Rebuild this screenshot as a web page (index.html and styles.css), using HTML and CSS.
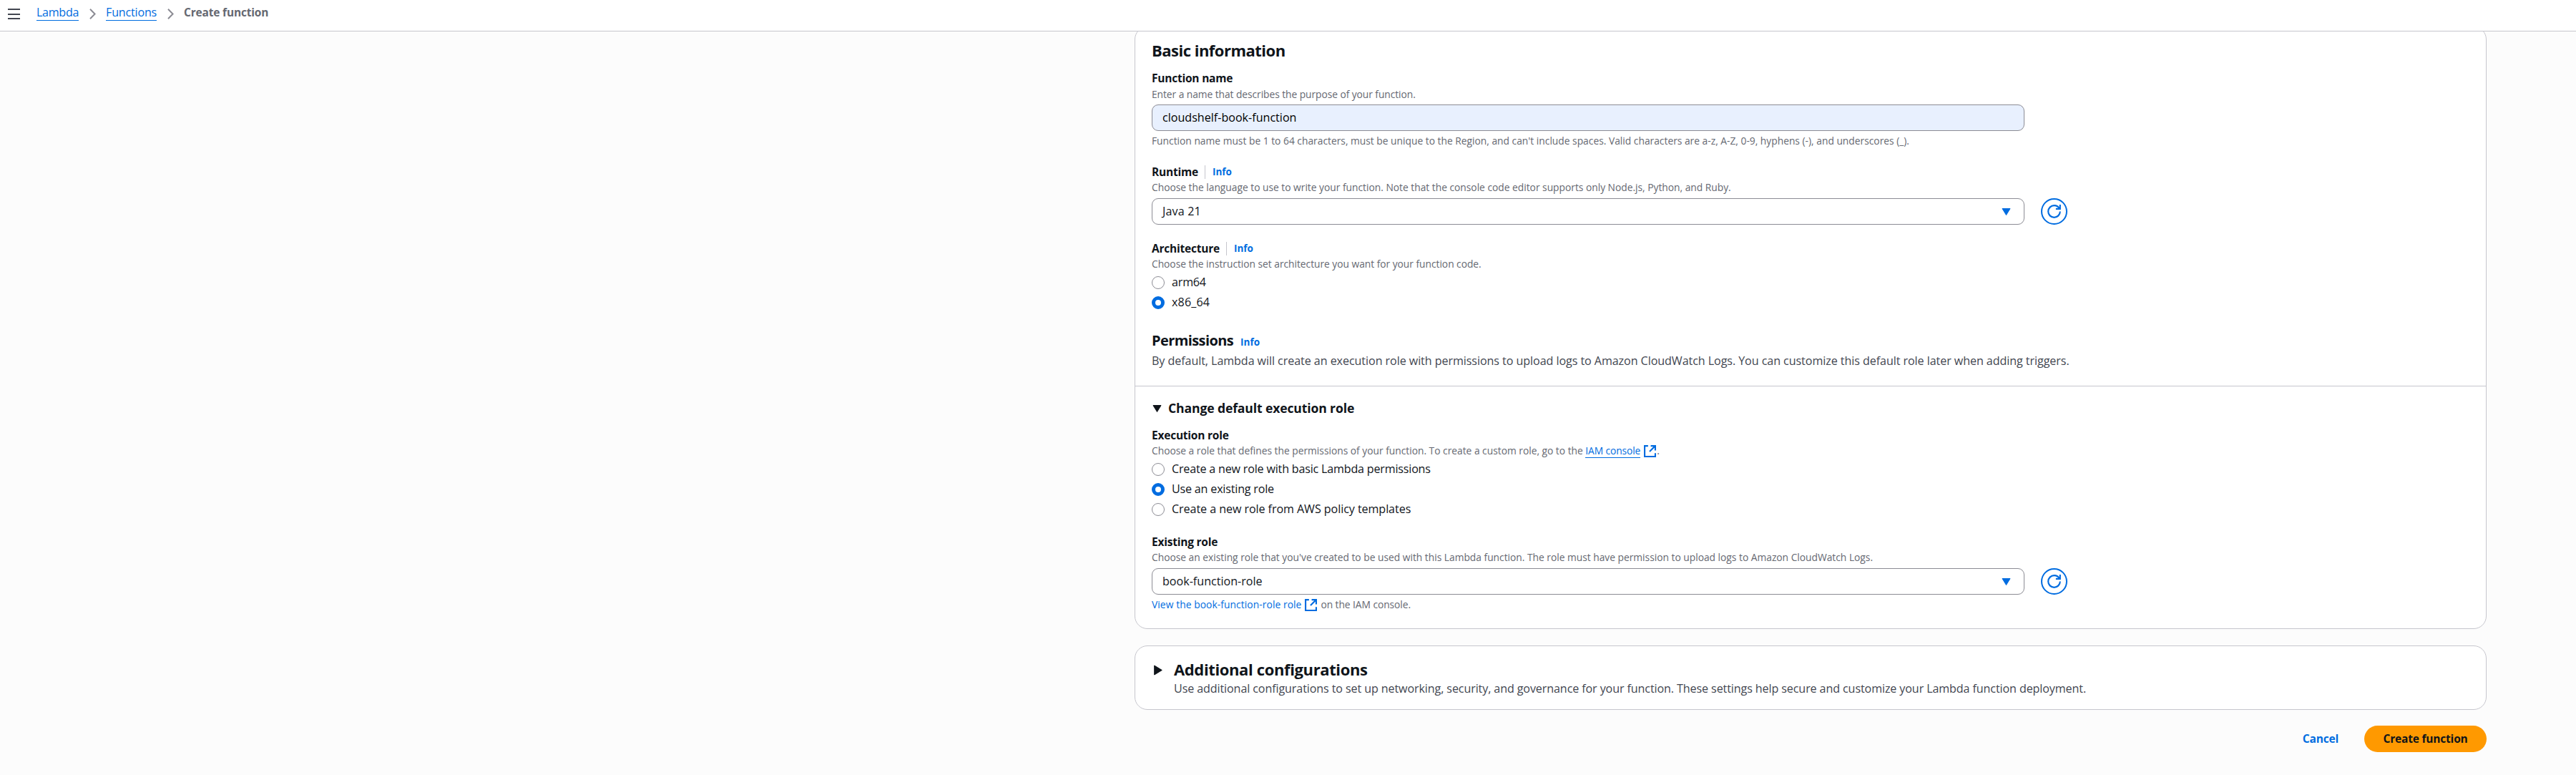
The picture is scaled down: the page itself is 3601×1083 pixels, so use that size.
FILE: index.html
```html
<!DOCTYPE html>
<html lang="en">
<head>
<meta charset="utf-8">
<title>Create function - Lambda</title>
<link rel="stylesheet" href="styles.css">
</head>
<body>
<svg class="sprite" aria-hidden="true">
  <symbol id="chevron" viewBox="0 0 9 15"><path d="M1 .8 7.600 7.500 1 14.200" fill="none" stroke="currentColor" stroke-width="2"/></symbol>
  <symbol id="refresh" viewBox="0 0 16 16"><path d="M15 8c0 3.87-3.13 7-7 7s-7-3.13-7-7 3.13-7 7-7c2.79 0 5.2 1.63 6.33 4M15 0v5h-5" fill="none" stroke="currentColor" stroke-width="1.8"/></symbol>
  <symbol id="external" viewBox="0 0 16 16"><path d="M9 1h6v6M7.500 8.500 15 1M15 10.500V15H1V1h4.500" fill="none" stroke="currentColor" stroke-width="2"/></symbol>
  <symbol id="down" viewBox="0 0 13 10"><path d="M1 .5h11L6.500 9.500z" fill="currentColor" stroke="currentColor" stroke-linejoin="round"/></symbol>
  <symbol id="right" viewBox="0 0 12 15"><path d="M.7 1v13L11.300 7.500z" fill="currentColor" stroke="currentColor" stroke-linejoin="round"/></symbol>
</svg>

<header class="topbar">
  <button class="menu" aria-label="Open navigation"><span></span><span></span><span></span></button>
  <nav class="crumbs">
    <a class="crumb tight" href="#">Lambda</a>
    <svg class="chevron"><use href="#chevron"/></svg>
    <a class="crumb" href="#">Functions</a>
    <svg class="chevron"><use href="#chevron"/></svg>
    <span class="current">Create function</span>
  </nav>
</header>

<main class="content">
  <section class="card">
    <div class="block basic">
      <h2 class="title">Basic information</h2>

      <div class="field name-field">
        <label class="label">Function name</label>
        <p class="hint">Enter a name that describes the purpose of your function.</p>
        <div class="control filled"><span>cloudshelf-book-function</span></div>
        <p class="hint note">Function name must be 1 to 64 characters, must be unique to the Region, and can't include spaces. Valid characters are a-z, A-Z, 0-9, hyphens (-), and underscores (_).</p>
      </div>

      <div class="field runtime-field">
        <div class="label-row"><label class="label">Runtime</label><a class="info" href="#">Info</a></div>
        <p class="hint wide">Choose the language to use to write your function. Note that the console code editor supports only Node.js, Python, and Ruby.</p>
        <div class="control-row">
          <div class="control"><span class="java">Java 21</span><svg class="caret"><use href="#down"/></svg></div>
          <button class="refresh" aria-label="Refresh"><svg><use href="#refresh"/></svg></button>
        </div>
      </div>

      <div class="field arch-field">
        <div class="label-row"><label class="label">Architecture</label><a class="info" href="#">Info</a></div>
        <p class="hint wide arch">Choose the instruction set architecture you want for your function code.</p>
        <div class="radios">
          <label class="radio"><i class="dot"></i><span>arm64</span></label>
          <label class="radio loose"><i class="dot on"></i><span>x86_64</span></label>
        </div>
      </div>

      <div class="permissions">
        <div class="perm-head"><h3 class="subtitle">Permissions</h3><a class="info" href="#">Info</a></div>
        <p class="lead">By default, Lambda will create an execution role with permissions to upload logs to Amazon CloudWatch Logs. You can customize this default role later when adding triggers.</p>
      </div>
    </div>

    <div class="block role">
      <div class="expander"><svg class="caret"><use href="#down"/></svg><h3>Change default execution role</h3></div>

      <div class="field exec-field">
        <label class="label">Execution role</label>
        <p class="hint wide"><span>Choose a role that defines the permissions of your function. To create a custom role, go to the </span><a class="iam" href="#">IAM console</a><svg class="ext"><use href="#external"/></svg><span class="stop">.</span></p>
        <div class="radios">
          <label class="radio"><i class="dot"></i><span>Create a new role with basic Lambda permissions</span></label>
          <label class="radio"><i class="dot on"></i><span>Use an existing role</span></label>
          <label class="radio policy"><i class="dot"></i><span>Create a new role from AWS policy templates</span></label>
        </div>
      </div>

      <div class="field existing-field">
        <label class="label">Existing role</label>
        <p class="hint wide">Choose an existing role that you've created to be used with this Lambda function. The role must have permission to upload logs to Amazon CloudWatch Logs.</p>
        <div class="control-row">
          <div class="control"><span>book-function-role</span><svg class="caret"><use href="#down"/></svg></div>
          <button class="refresh" aria-label="Refresh"><svg><use href="#refresh"/></svg></button>
        </div>
        <p class="hint view"><a href="#">View the book-function-role role</a><svg class="ext"><use href="#external"/></svg><span>on the IAM console.</span></p>
      </div>
    </div>
  </section>

  <section class="card extra">
    <svg class="arrow"><use href="#right"/></svg>
    <div>
      <h2 class="title">Additional configurations</h2>
      <p class="lead">Use additional configurations to set up networking, security, and governance for your function. These settings help secure and customize your Lambda function deployment.</p>
    </div>
  </section>

  <footer class="actions">
    <button class="cancel">Cancel</button>
    <button class="primary">Create function</button>
  </footer>
</main>
</body>
</html>
```

FILE: styles.css
```css
* { box-sizing: border-box; }

body {
  margin: 0;
  height: 1083px;
  overflow: hidden;
  background: #fcfcfc;
  color: #0f141a;
  font: 16.1px/23px "Open Sans", "Noto Sans", sans-serif;
}

h2, h3, p { margin: 0; }
a { color: #006ce0; text-decoration: none; }
button { padding: 0; border: 0; background: none; font: inherit; }
.sprite { position: absolute; width: 0; height: 0; }
svg { display: block; flex: none; }

/* Top bar */
.topbar {
  position: relative;
  z-index: 1;
  display: flex;
  align-items: flex-start;
  height: 44px;
  padding: 6px 11px 0;
  background: #fff;
  border-bottom: 1px solid #c6c6cd;
}
.menu {
  display: flex;
  flex-direction: column;
  gap: 4px;
  width: 17px;
  margin: 6px 23px 0 0;
}
.menu span { height: 2px; margin-bottom: 0.5px; background: #424650; }
.crumbs { display: flex; align-items: flex-start; }
.crumb { border-bottom: 1px solid #006ce0; letter-spacing: -0.2px; height: 23px; }
.crumb.tight { letter-spacing: -0.3px; }
.chevron { width: 9px; height: 15px; margin: 6px 14px 0 15px; color: #8c8c94; }
.current { color: #656871; font-size: 15.5px; font-weight: 700; letter-spacing: -0.19px; }

/* Cards */
.content { width: 1890px; margin: -7px 0 0 1586px; }
.card { background: #fff; border: 1px solid #c6c6cd; border-radius: 18px; }
.block { padding: 0 23px; }
.basic { padding-top: 18px; padding-bottom: 23px; border-bottom: 1px solid #c6c6cd; }
.role { padding-top: 18px; padding-bottom: 24px; }
.title { font-size: 22px; line-height: 28px; font-weight: 700; letter-spacing: -0.51px; }

/* Fields */
.name-field { margin-top: 14px; }
.runtime-field { margin-top: 23px; }
.arch-field { margin-top: 22px; }
.exec-field { margin-top: 14px; }
.existing-field { margin-top: 23px; }
.label { display: block; font-size: 15.5px; font-weight: 700; letter-spacing: -0.22px; }
.label-row { display: flex; align-items: center; }
.label-row .info { margin-left: 9px; padding-left: 10px; border-left: 1px solid #c6c6cd; }
.info { font-size: 13.5px; font-weight: 700; line-height: 19px; }
.hint {
  display: flex;
  margin: 1px 0 5px;
  color: #656871;
  font-size: 13.8px;
  line-height: 18px;
  letter-spacing: -0.06px;
  white-space: pre;
}
.name-field .label + .hint { margin-top: 2px; }
.hint.wide { letter-spacing: -0.01px; }
.hint.arch { letter-spacing: -0.03px; }
.hint.note { margin: 5px 0 0; letter-spacing: 0; }
.control {
  display: flex;
  align-items: center;
  justify-content: space-between;
  width: 1220px;
  height: 37px;
  padding: 0 18px 0 14px;
  border: 1px solid #8c8c94;
  border-radius: 9px;
}
.filled { background: #e8f0fe; color: #000; }
.java { letter-spacing: 0.15px; }
.caret { width: 13px; height: 10px; }
.control .caret { color: #006ce0; }
.control-row { display: flex; gap: 23px; margin-top: 6px; }
.refresh {
  display: grid;
  place-items: center;
  width: 37px;
  height: 37px;
  border: 2px solid #006ce0;
  border-radius: 50%;
  color: #006ce0;
}
.refresh svg { width: 19px; height: 19px; }
.radios { display: grid; gap: 5px; margin-top: 4px; }
.radio { display: flex; align-items: center; gap: 10px; letter-spacing: -0.19px; }
.radio.loose { letter-spacing: 0.15px; }
.radio.policy { letter-spacing: -0.07px; }
.dot { width: 18px; height: 18px; border: 1px solid #8c8c94; border-radius: 50%; }
.dot.on { border: 5px solid #006ce0; }

/* Permissions */
.permissions { margin-top: 29px; }
.perm-head { display: flex; align-items: baseline; gap: 10px; }
.subtitle { font-size: 20px; line-height: 26px; font-weight: 700; letter-spacing: -0.6px; }
.lead { margin-top: 4px; color: #424650; letter-spacing: -0.07px; }

/* Execution role */
.expander { display: flex; align-items: center; gap: 9px; padding-left: 1px; }
.expander h3 { font-size: 17.6px; line-height: 25px; font-weight: 700; letter-spacing: -0.14px; }
.iam { height: 19px; margin-bottom: -1px; border-bottom: 1px solid #006ce0; letter-spacing: -0.1px; }
.ext { width: 17px; height: 17px; margin: 0.5px 0 0 5px; color: #006ce0; }
.stop { margin-left: 1px; }
.hint.view { margin: 5px 0 0; }
.view a { letter-spacing: 0.08px; }
.view span { margin-left: 5px; }

/* Additional configurations */
.extra { display: flex; gap: 16px; height: 90px; margin-top: 23px; padding: 18px 26px; }
.extra .title { letter-spacing: -0.37px; }
.arrow { width: 12px; height: 15px; margin-top: 8px; }
.extra .lead { margin-top: 2px; letter-spacing: -0.107px; }

/* Actions */
.actions { display: flex; justify-content: flex-end; gap: 36px; margin-top: 22px; }
.actions button { height: 37px; font-size: 15.5px; font-weight: 700; letter-spacing: -0.19px; }
.actions .cancel { color: #006ce0; }
.actions .primary { width: 171px; border-radius: 19px; background: #ff9900; color: #0f141a; }
```
